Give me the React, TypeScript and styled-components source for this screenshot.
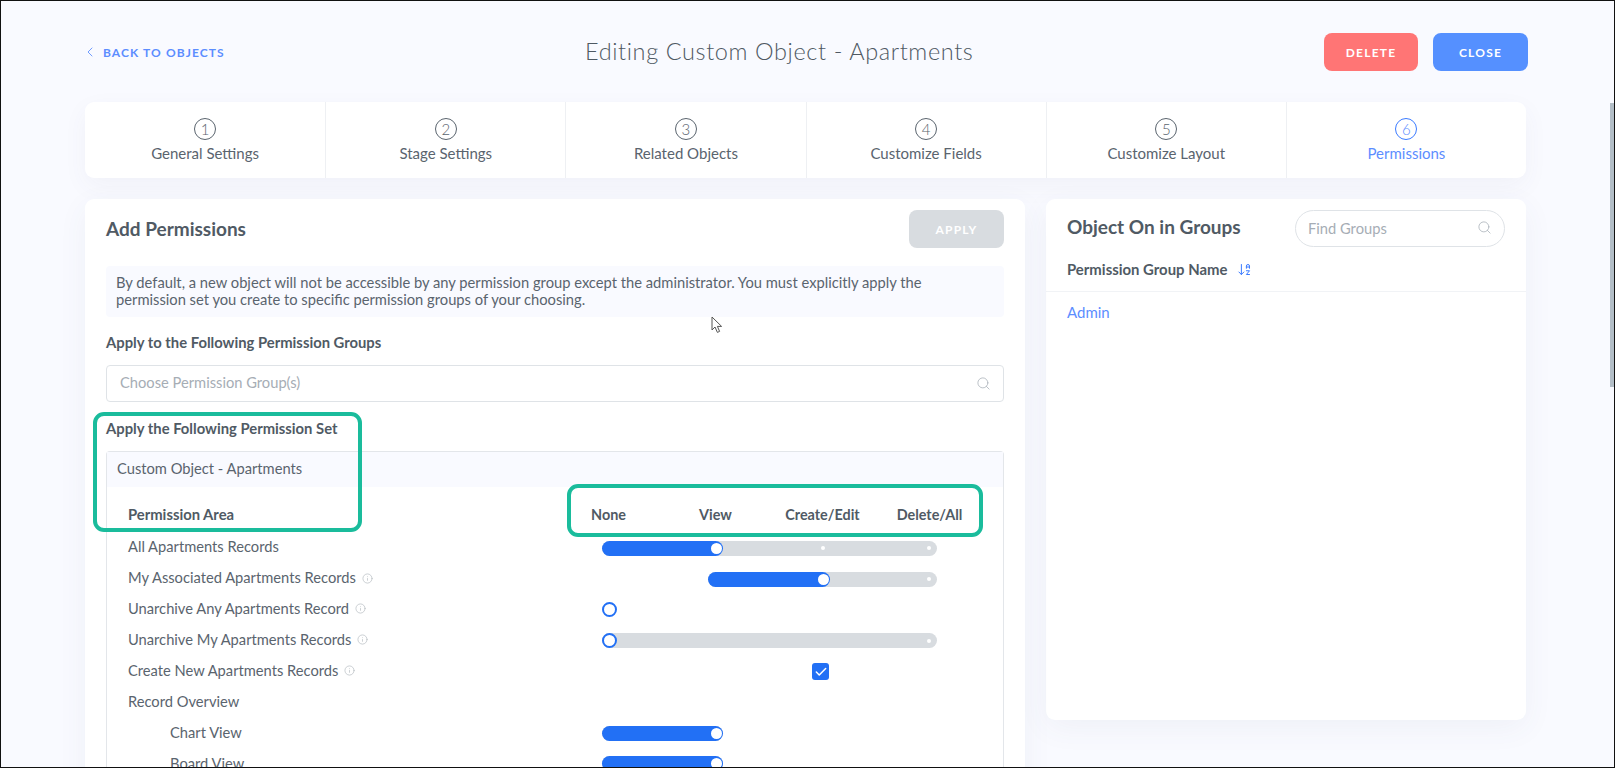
import React from "react";
import styled, { createGlobalStyle } from "styled-components";
import { ChevronLeft, Search, Info, Check, ArrowDownAZ } from "lucide-react";

const Global = createGlobalStyle`
  html, body { margin: 0; padding: 0; overflow: hidden; background: #f9faff; }
  * { box-sizing: border-box; }
  body { font-family: Lato, "Liberation Sans", sans-serif; color: #4b5560; }
`;

const Page = styled.div`
  position: relative;
  width: 1615px;
  height: 768px;
  overflow: hidden;
  padding: 32px 88px 0 84px;
  background: #f9faff;
  border: 1px solid #111;
`;

const Header = styled.header`
  display: grid;
  grid-template-columns: 500px auto 1fr;
  align-items: center;
  height: 38px;
  margin-bottom: 31px;
`;

const BackLink = styled.a`
  display: flex;
  align-items: center;
  gap: 5px;
  color: #5c8dff;
  font-size: 12px;
  font-weight: 700;
  letter-spacing: 1.1px;
  svg { margin-left: -3px; }
`;

const Title = styled.h1`
  margin: -2px 0 0;
  font-size: 23.5px;
  font-weight: 300;
  color: #4f5963;
  letter-spacing: 0.62px;
`;

const Actions = styled.div`
  display: flex;
  justify-content: flex-end;
  gap: 15px;
  margin-right: -2px;
`;

const Button = styled.button<{ $bg: string; $w: number }>`
  width: ${(p) => p.$w}px;
  height: 38px;
  border: 0;
  border-radius: 8px;
  background: ${(p) => p.$bg};
  color: #fff;
  font-family: inherit;
  font-size: 12px;
  font-weight: 700;
  letter-spacing: 1.2px;
`;

const Stepper = styled.nav`
  display: grid;
  grid-template-columns: repeat(6, 1fr);
  height: 76px;
  margin-bottom: 21px;
  background: #fff;
  border-radius: 9px;
  box-shadow: 0 8px 24px rgba(70, 80, 120, 0.05);
`;

const Step = styled.div<{ $active?: boolean }>`
  display: flex;
  flex-direction: column;
  align-items: center;
  padding-top: 16px;
  gap: 5px;
  color: ${(p) => (p.$active ? "#5c8dff" : "#5a646e")};
  font-size: 15px;
  & + & { border-left: 1px solid #eef0f3; }
`;

const StepNum = styled.span<{ $active?: boolean }>`
  display: flex;
  align-items: center;
  justify-content: center;
  width: 22px;
  height: 22px;
  margin-bottom: -1px;
  border-radius: 50%;
  border: 1.3px solid ${(p) => (p.$active ? "#3b7bff" : "#5a646e")};
  font-size: 15px;
  font-weight: 300;
  line-height: 1;
`;

const Columns = styled.div`
  display: grid;
  grid-template-columns: 940px 480px;
  gap: 21px;
  align-items: start;
`;

const Card = styled.section`
  background: #fff;
  border-radius: 9px;
  box-shadow: 0 8px 30px rgba(70, 80, 120, 0.06);
`;

const LeftCard = styled(Card)`
  position: relative;
  padding: 11px 21px 0;
  height: 700px;
`;

const CardHead = styled.div`
  display: flex;
  align-items: center;
  justify-content: space-between;
  margin-bottom: 18px;
`;

const CardTitle = styled.h2`
  margin: -2px 0 0;
  font-size: 19px;
  font-weight: 700;
  color: #505a64;
`;

const InfoBox = styled.p`
  margin: 0 0 16px;
  height: 51px;
  padding: 8px 60px 8px 10px;
  background: #f9faff;
  border-radius: 4px;
  font-size: 14.73px;
  line-height: 17px;
  color: #5a646e;
`;

const Label = styled.div`
  font-size: 14.8px;
  font-weight: 700;
  line-height: 18px;
  color: #505a64;
`;

const SelectInput = styled.div`
  display: flex;
  align-items: center;
  justify-content: space-between;
  height: 37px;
  margin: 14px 0 17px;
  padding: 0 12px 3px 13px;
  border: 1px solid #dfe3e7;
  border-radius: 4px;
  font-size: 14.7px;
  color: #a6adb5;
  svg { margin-top: 3px; }
`;

const SetBox = styled.div`
  margin-top: 14px;
  border: 1px solid #e3e6ea;
  border-bottom: 0;
  border-radius: 4px 4px 0 0;
`;

const SetHead = styled.div`
  display: flex;
  align-items: center;
  height: 35px;
  padding: 0 0 4px 10px;
  background: #f9faff;
  font-size: 14.7px;
  color: #5a646e;
`;

const Grid = styled.div`
  display: grid;
  grid-template-columns: 474px 1fr;
  padding-left: 21px;
`;

const HeadRow = styled(Grid)`
  height: 46px;
  padding-top: 8px;
  align-items: center;
  font-size: 14.8px;
  font-weight: 700;
  color: #505a64;
`;

const Levels = styled.div`
  display: grid;
  grid-template-columns: 107px 107px 107px 107px;
  margin-left: -47px;
  font-size: 14.4px;
  text-align: center;
`;

const Row = styled(Grid)`
  height: 30.8px;
  align-items: center;
  font-size: 14.7px;
  color: #5a646e;
`;

const RowLabel = styled.div<{ $indent?: boolean; $lift?: boolean }>`
  display: flex;
  align-items: center;
  gap: 6px;
  padding-left: ${(p) => (p.$indent ? "42px" : "0")};
  margin-top: ${(p) => (p.$lift ? "-4px" : "-2px")};
  svg { color: #b4bac1; margin-top: 2px; }
`;

const Track = styled.div<{ $off: number; $w: number }>`
  position: relative;
  margin-left: ${(p) => p.$off}px;
  width: ${(p) => p.$w}px;
  height: 15px;
  border-radius: 8px;
  background: #d8dce0;
`;

const Fill = styled.div`
  position: absolute;
  left: 0;
  top: 0;
  bottom: 0;
  border-radius: 8px;
  background: #2270f5;
`;

const Knob = styled.span<{ $ring?: boolean }>`
  position: absolute;
  top: ${(p) => (p.$ring ? "0" : "2px")};
  width: ${(p) => (p.$ring ? "15px" : "11px")};
  height: ${(p) => (p.$ring ? "15px" : "11px")};
  border-radius: 50%;
  background: #fff;
  border: ${(p) => (p.$ring ? "2px solid #2270f5" : "0")};
`;

const Dot = styled.span`
  position: absolute;
  top: 5.5px;
  width: 4px;
  height: 4px;
  border-radius: 50%;
  background: #fff;
`;

const Ring = styled.span`
  display: block;
  width: 15px;
  height: 15px;
  border-radius: 50%;
  border: 2px solid #2270f5;
  background: #fff;
`;

const Checkbox = styled.span`
  display: flex;
  align-items: center;
  justify-content: center;
  margin-left: 210px;
  width: 17px;
  height: 17px;
  border-radius: 3px;
  background: #2270f5;
  color: #fff;
`;

const Highlight = styled.div<{ $x: number; $y: number; $w: number; $h: number }>`
  position: absolute;
  left: ${(p) => p.$x}px;
  top: ${(p) => p.$y}px;
  width: ${(p) => p.$w}px;
  height: ${(p) => p.$h}px;
  border: 4px solid #1abc9c;
  border-radius: 11px;
  pointer-events: none;
`;

const RightCard = styled(Card)`
  height: 521px;
`;

const RightHead = styled.div`
  display: flex;
  align-items: center;
  justify-content: space-between;
  padding: 11px 21px 0 21px;
  h2 { margin-top: -4px; }
`;

const FindBox = styled.div`
  display: flex;
  align-items: center;
  justify-content: space-between;
  width: 210px;
  height: 37px;
  padding: 0 12px 2px 12px;
  border: 1px solid #dfe3e7;
  border-radius: 19px;
  font-size: 14.7px;
  color: #a6adb5;
`;

const ColHead = styled.div`
  display: flex;
  align-items: center;
  gap: 10px;
  height: 45px;
  padding-left: 21px;
  border-bottom: 1px solid #f1f3f6;
  font-size: 14.9px;
  font-weight: 700;
  color: #505a64;
  svg { color: #3b7bff; }
`;

const GroupLink = styled.div`
  padding: 11px 21px;
  font-size: 15px;
  color: #5c8dff;
`;

const Thumb = styled.div`
  position: absolute;
  right: 0;
  top: 102px;
  width: 4px;
  height: 284px;
  background: #b3bec7;
`;

const Pointer = styled.svg`
  position: absolute;
  left: 710px;
  top: 315px;
`;

const steps = ["General Settings", "Stage Settings", "Related Objects", "Customize Fields", "Customize Layout", "Permissions"];
const stops = [7, 114, 221, 327];

function Slider({ off = 0, w = 335, fill, knob, dots = [], ring }: { off?: number; w?: number; fill?: number; knob: number; dots?: number[]; ring?: boolean }) {
  return (
    <Track $off={off} $w={w}>
      {fill ? <Fill style={{ width: fill }} /> : null}
      {dots.map((d) => <Dot key={d} style={{ left: d - off - 2 }} />)}
      <Knob $ring={ring} style={{ left: knob - off - (ring ? 7 : 5.5) }} />
    </Track>
  );
}

const Tip = () => <Info size={11} strokeWidth={1.5} />;

export default function App() {
  return (
    <Page>
      <Global />
      <Header>
        <BackLink><ChevronLeft size={16} strokeWidth={1.3} /> BACK TO OBJECTS</BackLink>
        <Title>Editing Custom Object - Apartments</Title>
        <Actions>
          <Button $bg="#ff7575" $w={94}>DELETE</Button>
          <Button $bg="#5590ff" $w={95}>CLOSE</Button>
        </Actions>
      </Header>
      <Stepper>
        {steps.map((s, i) => (
          <Step key={s} $active={i === 5}>
            <StepNum $active={i === 5}>{i + 1}</StepNum>
            {s}
          </Step>
        ))}
      </Stepper>
      <Columns>
        <LeftCard>
          <CardHead>
            <CardTitle>Add Permissions</CardTitle>
            <Button $bg="#d8dce0" $w={95}>APPLY</Button>
          </CardHead>
          <InfoBox>
            By default, a new object will not be accessible by any permission group except the administrator. You must explicitly apply the permission set you create to specific permission groups of your choosing.
          </InfoBox>
          <Label>Apply to the Following Permission Groups</Label>
          <SelectInput>
            Choose Permission Group(s)
            <Search size={15} strokeWidth={1.2} />
          </SelectInput>
          <Label>Apply the Following Permission Set</Label>
          <SetBox>
            <SetHead>Custom Object - Apartments</SetHead>
            <HeadRow>
              <div>Permission Area</div>
              <Levels>
                <div>None</div>
                <div>View</div>
                <div>Create/Edit</div>
                <div>Delete/All</div>
              </Levels>
            </HeadRow>
            <Row>
              <RowLabel $lift>All Apartments Records</RowLabel>
              <Slider fill={121} knob={stops[1]} dots={[stops[2], stops[3]]} />
            </Row>
            <Row>
              <RowLabel $lift>My Associated Apartments Records <Tip /></RowLabel>
              <Slider off={106} w={229} fill={122} knob={stops[2]} dots={[stops[3]]} />
            </Row>
            <Row>
              <RowLabel $lift>Unarchive Any Apartments Record <Tip /></RowLabel>
              <Ring />
            </Row>
            <Row>
              <RowLabel $lift>Unarchive My Apartments Records <Tip /></RowLabel>
              <Slider ring knob={stops[0]} dots={[stops[3]]} />
            </Row>
            <Row>
              <RowLabel $lift>Create New Apartments Records <Tip /></RowLabel>
              <Checkbox><Check size={14} strokeWidth={2.6} /></Checkbox>
            </Row>
            <Row>
              <RowLabel>Record Overview</RowLabel>
              <div />
            </Row>
            <Row>
              <RowLabel $indent>Chart View</RowLabel>
              <Slider w={121} fill={121} knob={stops[1]} />
            </Row>
            <Row>
              <RowLabel $indent>Board View</RowLabel>
              <Slider w={121} fill={121} knob={stops[1]} />
            </Row>
          </SetBox>
          <Highlight $x={8} $y={213} $w={269} $h={120} />
          <Highlight $x={482} $y={285} $w={416} $h={53} />
        </LeftCard>
        <RightCard>
          <RightHead>
            <CardTitle>Object On in Groups</CardTitle>
            <FindBox>Find Groups <Search size={15} strokeWidth={1.2} /></FindBox>
          </RightHead>
          <ColHead>Permission Group Name <ArrowDownAZ size={15} strokeWidth={1.6} /></ColHead>
          <GroupLink>Admin</GroupLink>
        </RightCard>
      </Columns>
      <Pointer width="12" height="18" viewBox="0 0 12 18" fill="none">
        <path d="M1 1v13l3-3 2.400 5.400 2.200-1L6.400 10.400H10.600z" fill="#fff" stroke="#555" strokeWidth="1" />
      </Pointer>
      <Thumb />
    </Page>
  );
}
